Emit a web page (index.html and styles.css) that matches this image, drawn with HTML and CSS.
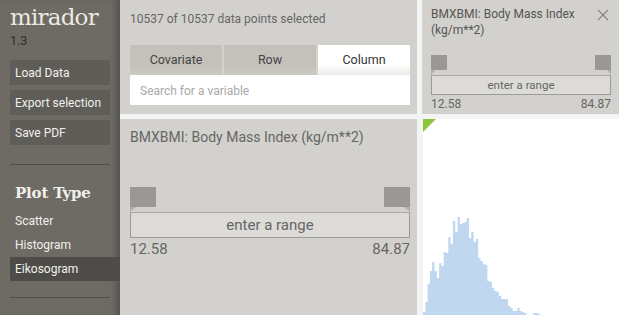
FILE: index.html
```html
<!DOCTYPE html>
<html lang="en">
<head>
    <meta charset="UTF-8">
    <title>Mirador</title>
    <link rel="stylesheet" href="styles.css">
</head>
<body>
    <div class="app">
        <aside class="sidebar">
            <div class="brand">mirador</div>
            <div class="version">1.3</div>
            <div class="actions">
                <button class="side-btn">Load Data</button>
                <button class="side-btn">Export selection</button>
                <button class="side-btn">Save PDF</button>
            </div>
            <hr class="divider">
            <h2 class="section-title">Plot Type</h2>
            <ul class="plot-types">
                <li>Scatter</li>
                <li>Histogram</li>
                <li class="active">Eikosogram</li>
            </ul>
            <hr class="divider">
        </aside>

        <main class="workspace">
            <section class="panel variables">
                <div class="selection-count">10537 of 10537 data points selected</div>
                <div class="tabs">
                    <div class="tab">Covariate</div>
                    <div class="tab">Row</div>
                    <div class="tab active">Column</div>
                </div>
                <input class="search" type="text" placeholder="Search for a variable">
            </section>

            <section class="panel column-var">
                <div class="var-head">
                    <span class="var-title">BMXBMI: Body Mass Index (kg/m**2)</span>
                    <svg class="close" width="12" height="12" viewBox="0 0 12 12">
                        <path d="M1 1 L11 11 M11 1 L1 11" stroke="#858480" stroke-width="1.1" fill="none"/>
                    </svg>
                </div>
                <div class="range">
                    <div class="handles">
                        <span class="handle left"></span>
                        <span class="handle right"></span>
                    </div>
                    <div class="range-box">enter a range</div>
                    <div class="range-labels"><span>12.58</span><span>84.87</span></div>
                </div>
            </section>

            <section class="panel row-var">
                <div class="var-title">BMXBMI: Body Mass Index (kg/m**2)</div>
                <div class="range">
                    <div class="handles">
                        <span class="handle left"></span>
                        <span class="handle right"></span>
                    </div>
                    <div class="range-box">enter a range</div>
                    <div class="range-labels"><span>12.58</span><span>84.87</span></div>
                </div>
            </section>

            <section class="plot">
                <span class="corner"></span>
                <svg class="hist" width="196" height="196">
                    <path id="histPath" d=""></path>
                </svg>
            </section>
        </main>
    </div>
    <script>
        // bin counts of the histogram, scaled to pixels
        const bins = [3, 13, 31, 44, 53, 44, 37, 52, 49, 63, 62, 78, 71, 94, 83, 98, 91, 92, 93, 97,
                      77, 83, 73, 76, 57, 54, 51, 50, 34, 33, 27, 24, 23, 19, 16, 16, 16, 9, 7, 4,
                      4, 7, 4, 3, 2, 0, 0, 0, 2, 2, 1];
        const binWidth = 2.3;
        const base = 196;
        let d = `M0 ${base}`;
        bins.forEach((h, i) => {
            const x0 = (i * binWidth).toFixed(2);
            const x1 = ((i + 1) * binWidth).toFixed(2);
            d += ` L${x0} ${base - h} L${x1} ${base - h}`;
        });
        d += ` L${(bins.length * binWidth).toFixed(2)} ${base} Z`;
        document.getElementById('histPath').setAttribute('d', d);
    </script>
</body>
</html>
```

FILE: styles.css
```css
body {
    margin: 0;
    background: #f4f4f4;
    font-family: Roboto, 'Liberation Sans', Arial, sans-serif;
    overflow: hidden;
}
.app {
    display: flex;
    height: 315px;
}

/* sidebar */
.sidebar {
    width: 120px;
    flex: none;
    background: #6e6b65;
    box-shadow: inset -7px 0 6px -3px rgba(0, 0, 0, 0.22);
    padding-top: 3px;
    box-sizing: border-box;
}
.brand {
    font-family: 'DejaVu Serif', 'Liberation Serif', serif;
    font-size: 23px;
    letter-spacing: -0.8px;
    color: #ebe9e4;
    line-height: 28px;
    margin-left: 10px;
}
.version {
    font-size: 12.5px;
    color: #2f2e2c;
    margin: 2px 0 0 10px;
    line-height: 16px;
}
.actions {
    display: flex;
    flex-direction: column;
    gap: 5px;
    margin: 11px 0 0 10px;
}
.side-btn {
    width: 100px;
    height: 25px;
    border: none;
    background: #5f5d58;
    color: #f1f0ec;
    font-family: inherit;
    font-size: 12px;
    text-align: left;
    padding: 1px 5px 0;
}
.divider {
    border: none;
    border-top: 1px solid #4e4c48;
    margin: 19px 10px 0 10px;
}
.section-title {
    font-family: 'DejaVu Serif', 'Liberation Serif', serif;
    font-size: 15px;
    font-weight: bold;
    letter-spacing: -0.2px;
    color: #f1f0ec;
    margin: 18px 0 0 15px;
    line-height: 20px;
}
.plot-types {
    list-style: none;
    margin: 6px 0 0 0;
    padding: 0;
}
.plot-types li {
    height: 24px;
    line-height: 24px;
    padding-left: 5px;
    margin-left: 10px;
    font-size: 12px;
    color: #f1f0ec;
}
.plot-types li.active {
    background: #4e4c48;
}
.plot-types + .divider {
    margin-top: 16px;
}

/* workspace */
.workspace {
    flex: 1;
    display: grid;
    grid-template-columns: 297px 197px;
    grid-template-rows: 114px 196px;
    column-gap: 5px;
    row-gap: 5px;
}
.panel {
    background: #d3d1cd;
    color: #666;
}
.variables {
    padding: 0 7px 0 10px;
}
.selection-count {
    font-size: 12px;
    line-height: 16px;
    margin-top: 11px;
}
.tabs {
    display: flex;
    gap: 2px;
    margin-top: 18px;
}
.tab {
    flex: 1;
    height: 30px;
    line-height: 30px;
    text-align: center;
    font-size: 12.5px;
    color: #444;
    background: linear-gradient(#c4c1bb, #c4c1bb 70%, #cdcac5);
}
.tab.active {
    background: linear-gradient(#fff, #fff 65%, #ecebe9);
    color: #333;
}
.search {
    display: block;
    width: 100%;
    box-sizing: border-box;
    height: 30px;
    border: none;
    outline: none;
    background: #fff;
    padding: 2px 10px 0;
    font-family: inherit;
    font-size: 12px;
}
.search::placeholder {
    color: #a9a9a9;
}

/* variable range widgets */
.row-var {
    padding: 9px 7px 0 10px;
}
.row-var .var-title {
    font-size: 14px;
    line-height: 18px;
}
.range {
    margin-top: 41px;
}
.handles {
    display: flex;
    justify-content: space-between;
}
.handle {
    width: 26px;
    height: 20px;
    background: #9a9894;
    position: relative;
    margin-bottom: 5px;
}
.handle::after {
    content: '';
    position: absolute;
    top: 20px;
    border-top: 5px solid #b1afab;
}
.handle.left::after {
    left: 0;
    border-right: 6px solid transparent;
}
.handle.right::after {
    right: 0;
    border-left: 6px solid transparent;
}
.range-box {
    height: 26px;
    box-sizing: border-box;
    border: 1px solid #9d9b97;
    border-top-color: #aaa8a4;
    background: #dcdbd7;
    text-align: center;
    line-height: 24px;
    font-size: 15px;
    color: #666;
}
.range-labels {
    display: flex;
    justify-content: space-between;
    font-size: 15px;
    line-height: 18px;
    margin-top: 2px;
}

.column-var {
    padding: 6px 8px 0 9px;
}
.var-head {
    display: flex;
    justify-content: space-between;
    align-items: flex-start;
}
.column-var .var-title {
    font-size: 12px;
    line-height: 16px;
    color: #555;
    width: 160px;
}
.close {
    margin: 3px 2px 0 0;
}
.column-var .range {
    margin-top: 17px;
}
.column-var .handle {
    width: 16px;
    height: 15px;
}
.column-var .handle::after {
    top: 15px;
    border-top-width: 5px;
}
.column-var .handle.left::after {
    border-right-width: 4px;
}
.column-var .handle.right::after {
    border-left-width: 4px;
}
.column-var .range-box {
    height: 20px;
    line-height: 18px;
    font-size: 11.5px;
}
.column-var .range-labels {
    font-size: 12px;
    line-height: 16px;
    margin-top: 1px;
}

/* plot */
.plot {
    background: #fff;
    position: relative;
    overflow: hidden;
    margin-left: 1px;
}
.corner {
    position: absolute;
    left: 0;
    top: 0;
    border-top: 13px solid #8cc43d;
    border-right: 13px solid transparent;
}
.hist {
    display: block;
}
.hist path {
    fill: #c0d8ef;
}
```
